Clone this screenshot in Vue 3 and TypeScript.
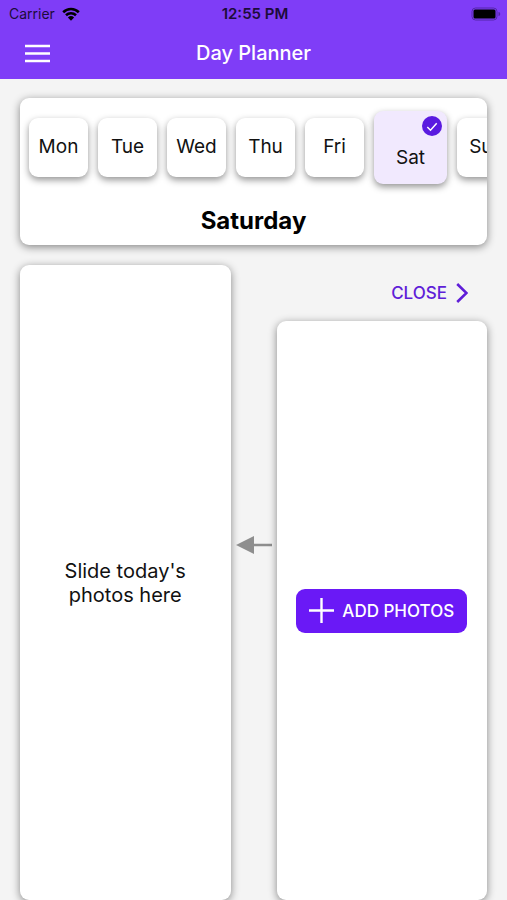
<script setup lang="ts">
import { computed, ref } from 'vue'

interface Day {
  short: string
  full: string
}

const days: Day[] = [
  { short: 'Mon', full: 'Monday' },
  { short: 'Tue', full: 'Tuesday' },
  { short: 'Wed', full: 'Wednesday' },
  { short: 'Thu', full: 'Thursday' },
  { short: 'Fri', full: 'Friday' },
  { short: 'Sat', full: 'Saturday' },
  { short: 'Sun', full: 'Sunday' },
]

const selected = ref<number>(5)
const selectedName = computed<string>(() => days[selected.value].full)
</script>

<template>
  <div class="screen">
    <header class="header">
      <div class="status">
        <div class="carrier">
          <span>Carrier</span>
          <svg class="wifi" viewBox="0 0 18 14" aria-hidden="true">
            <path d="M1.2 5.2a11.2 11.2 0 0 1 15.6 0" />
            <path d="M4 8.2a7.2 7.2 0 0 1 10 0" />
            <path class="dot" d="M5.9 10.4a4.5 4.5 0 0 1 6.2 0L9 13.7z" />
          </svg>
        </div>
        <span class="time">12:55 PM</span>
        <svg class="battery" viewBox="0 0 30 14" aria-hidden="true">
          <rect class="shell" x="1" y="1" width="25" height="12" rx="3.5" />
          <rect x="2.500" y="2.500" width="22" height="9" rx="1.500" />
          <path class="cap" d="M27.5 5v4c1.4-.4 1.7-1.2 1.7-2s-.3-1.6-1.7-2z" />
        </svg>
      </div>
      <div class="bar">
        <button class="menu" type="button" aria-label="Menu">
          <svg viewBox="0 0 25 19" aria-hidden="true">
            <path d="M0 2h25M0 9.5h25M0 17h25" />
          </svg>
        </button>
        <h1 class="title">Day Planner</h1>
      </div>
    </header>

    <main class="content">
      <section class="week">
        <div class="days">
          <button
            v-for="(day, i) in days"
            :key="day.short"
            type="button"
            class="day"
            :class="{ active: i === selected }"
            :aria-pressed="i === selected"
            @click="selected = i"
          >
            <svg v-if="i === selected" class="check" viewBox="0 0 20 20" aria-hidden="true">
              <circle cx="10" cy="10" r="10" />
              <path d="M5.3 11l3.2 3.2 6.200-7" />
            </svg>
            <span>{{ day.short }}</span>
          </button>
        </div>
        <h2 class="day-name">{{ selectedName }}</h2>
      </section>

      <section class="board">
        <div class="panel">
          <p class="hint">Slide today's photos here</p>
        </div>
        <div class="between">
          <svg class="arrow" viewBox="0 0 36 18" aria-hidden="true">
            <path class="head" d="M0 9L18 0v18z" />
            <path class="shaft" d="M17 9h19" />
          </svg>
        </div>
        <div class="source">
          <button class="close" type="button">
            <span>CLOSE</span>
            <svg viewBox="0 0 12 20" aria-hidden="true">
              <path d="M1.2 1L10.5 10l-9.3 9" />
            </svg>
          </button>
          <div class="panel grow">
            <button class="add" type="button">
              <svg viewBox="0 0 25 25" aria-hidden="true">
                <path d="M12.5 0v25M0 12.5h25" />
              </svg>
              <span>ADD PHOTOS</span>
            </button>
          </div>
        </div>
      </section>
    </main>
  </div>
</template>

<style>
body {
  background: #f4f4f4;
}
</style>

<style scoped>
.screen {
  display: flex;
  flex-direction: column;
  min-height: 100vh;
  background: #f4f4f4;
  color: #111;
  font-family: Inter, "Liberation Sans", sans-serif;
  overflow: hidden;
}
.screen * {
  box-sizing: border-box;
}
button {
  margin: 0;
  padding: 0;
  border: 0;
  background: none;
  color: inherit;
  font: inherit;
  cursor: pointer;
}
svg {
  display: block;
  flex: none;
}
.header {
  background: #7f3df7;
}
.status {
  display: grid;
  grid-template-columns: 1fr auto 1fr;
  align-items: center;
  height: 27px;
  padding: 0 6px 0 9px;
  color: #1c0c3a;
  font-size: 14px;
}
.carrier {
  display: flex;
  align-items: center;
  gap: 7px;
}
.wifi {
  width: 18px;
  height: 14px;
  fill: none;
  stroke: #000;
  stroke-width: 2.6;
}
.wifi .dot {
  fill: #000;
  stroke: none;
}
.time {
  font-size: 15px;
  font-weight: 600;
}
.battery {
  justify-self: end;
  width: 30px;
  height: 14px;
}
.battery .shell {
  fill: none;
  stroke: #5527aa;
}
.battery .cap {
  fill: #5527aa;
}
.bar {
  display: grid;
  grid-template-columns: 1fr auto 1fr;
  align-items: center;
  height: 52px;
  padding: 0 25px;
}
.menu {
  justify-self: start;
}
.menu svg {
  width: 25px;
  height: 19px;
  stroke: #fff;
  stroke-width: 2.6;
}
.title {
  margin: 0;
  color: #fff;
  font-size: 20px;
  font-weight: 500;
}
.content {
  display: flex;
  flex: 1;
  flex-direction: column;
  gap: 20px;
  padding: 19px 20px 0;
}
.week,
.panel {
  border-radius: 9px;
  background: #fff;
  box-shadow: 0 2px 8px rgba(0, 0, 0, 0.46);
}
.week {
  overflow: hidden;
}
.days {
  display: flex;
  align-items: center;
  gap: 10px;
  height: 98px;
  padding: 0 9px;
  overflow: hidden;
}
.day {
  display: flex;
  flex: none;
  flex-direction: column;
  align-items: center;
  justify-content: center;
  width: 59px;
  height: 59px;
  border-radius: 9px;
  background: #fff;
  box-shadow: 0 3px 7px rgba(0, 0, 0, 0.42);
  font-size: 19px;
  line-height: 24px;
}
.day.active {
  align-items: stretch;
  justify-content: flex-start;
  gap: 10px;
  width: 73px;
  height: 73px;
  padding: 5px;
  background: #f1e9fe;
}
.check {
  align-self: flex-end;
  width: 20px;
  height: 20px;
  fill: #5a1be0;
}
.check path {
  fill: none;
  stroke: #fff;
  stroke-width: 1.5;
}
.day-name {
  margin: 0;
  padding: 10px 0 9px;
  color: #000;
  font-size: 24px;
  font-weight: 700;
  line-height: 30px;
  text-align: center;
}
.board {
  display: grid;
  flex: 1;
  grid-template-columns: 1fr 46px 1fr;
}
.panel {
  display: flex;
  align-items: center;
  justify-content: center;
}
.grow {
  flex: 1;
}
.hint {
  max-width: 140px;
  margin: 0;
  font-size: 20px;
  line-height: 24px;
  text-align: center;
}
.between {
  display: flex;
  align-items: center;
  justify-content: center;
  padding-bottom: 76px;
}
.arrow {
  width: 36px;
  height: 18px;
}
.arrow .head {
  fill: #8e8e8e;
}
.arrow .shaft {
  stroke: #8e8e8e;
  stroke-width: 2.5;
}
.source {
  display: flex;
  flex-direction: column;
}
.close {
  display: flex;
  align-items: center;
  align-self: flex-end;
  gap: 9px;
  height: 56px;
  padding: 0 19px;
  color: #5f1ed8;
  font-size: 17px;
  font-weight: 500;
}
.close svg {
  width: 12px;
  height: 20px;
  fill: none;
  stroke: #5f1ed8;
  stroke-width: 2.6;
}
.add {
  display: flex;
  align-items: center;
  justify-content: center;
  gap: 8px;
  width: 171px;
  height: 44px;
  border-radius: 9px;
  background: #6a19f6;
  color: #fff;
  font-size: 17px;
  font-weight: 500;
}
.add svg {
  width: 25px;
  height: 25px;
  stroke: #fff;
  stroke-width: 2.4;
}
</style>
